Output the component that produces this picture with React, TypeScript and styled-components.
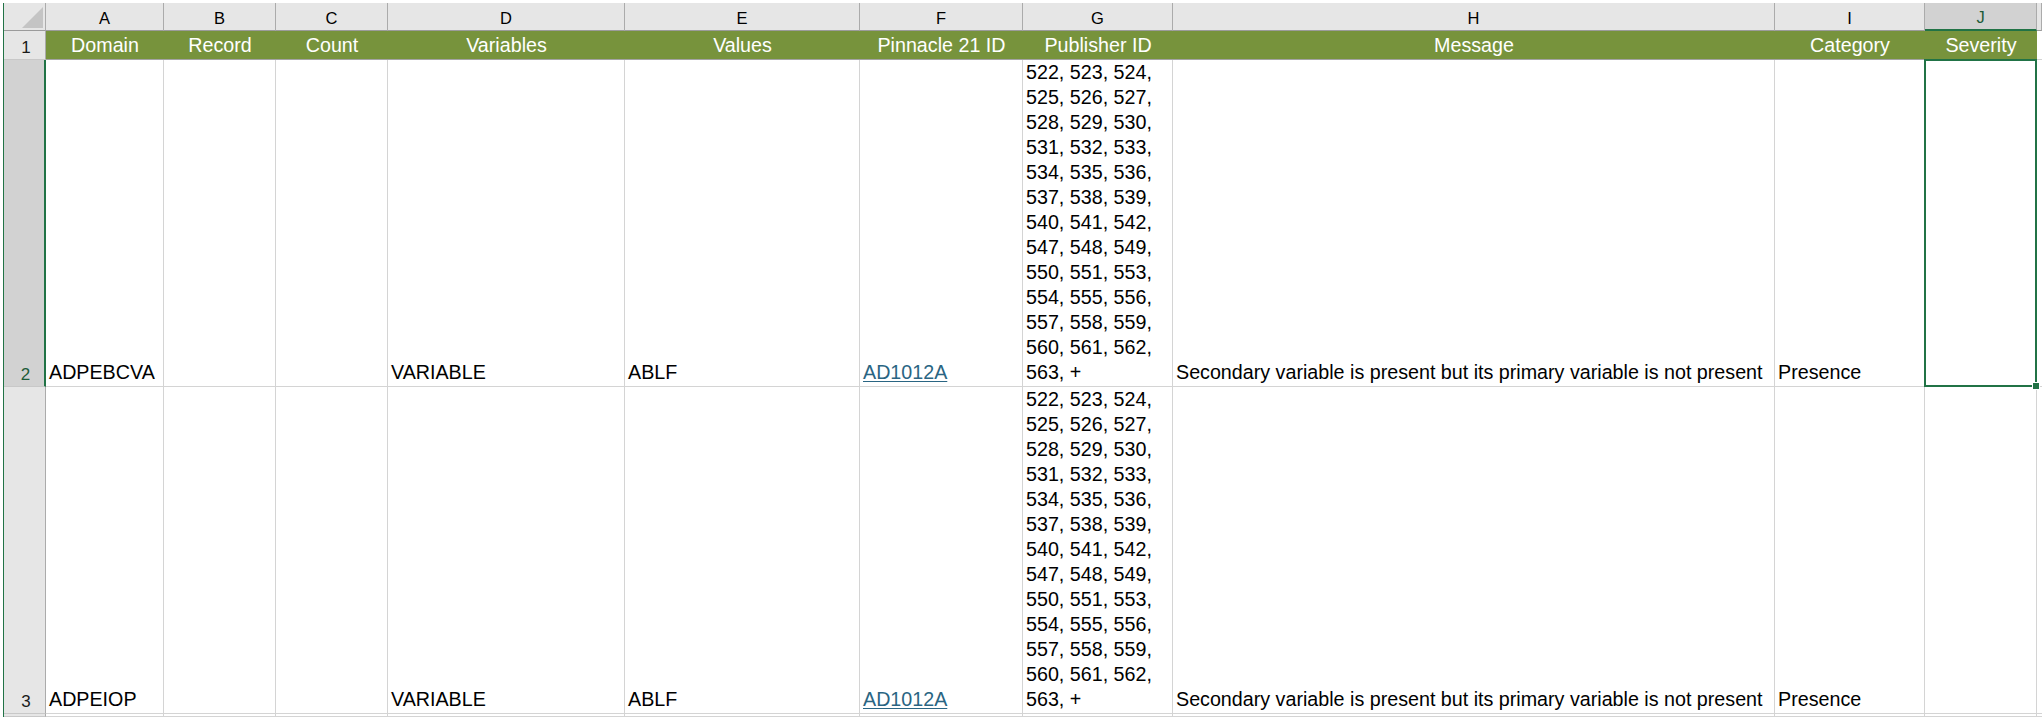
import React from 'react'
import styled, { createGlobalStyle } from 'styled-components'

const GlobalStyle = createGlobalStyle`
  html, body {
    margin: 0;
    background: #ffffff;
    overflow: hidden;
  }
`

const GREEN = '#217346'
const FONT = `"Liberation Sans", Arial, sans-serif`

interface Column {
  letter: string
  width: number
  title: string
}

const columns: Column[] = [
  { letter: 'A', width: 118, title: 'Domain' },
  { letter: 'B', width: 112, title: 'Record' },
  { letter: 'C', width: 112, title: 'Count' },
  { letter: 'D', width: 237, title: 'Variables' },
  { letter: 'E', width: 235, title: 'Values' },
  { letter: 'F', width: 163, title: 'Pinnacle 21 ID' },
  { letter: 'G', width: 150, title: 'Publisher ID' },
  { letter: 'H', width: 602, title: 'Message' },
  { letter: 'I', width: 150, title: 'Category' },
  { letter: 'J', width: 112, title: 'Severity' },
]

const publisherLines = [
  '522, 523, 524,',
  '525, 526, 527,',
  '528, 529, 530,',
  '531, 532, 533,',
  '534, 535, 536,',
  '537, 538, 539,',
  '540, 541, 542,',
  '547, 548, 549,',
  '550, 551, 553,',
  '554, 555, 556,',
  '557, 558, 559,',
  '560, 561, 562,',
  '563, +',
]

interface Issue {
  row: number
  domain: string
  variables: string
  values: string
  ruleId: string
  message: string
  category: string
}

const issues: Issue[] = [
  {
    row: 2,
    domain: 'ADPEBCVA',
    variables: 'VARIABLE',
    values: 'ABLF',
    ruleId: 'AD1012A',
    message: 'Secondary variable is present but its primary variable is not present',
    category: 'Presence',
  },
  {
    row: 3,
    domain: 'ADPEIOP',
    variables: 'VARIABLE',
    values: 'ABLF',
    ruleId: 'AD1012A',
    message: 'Secondary variable is present but its primary variable is not present',
    category: 'Presence',
  },
]

const SELECTED_ROW = 2
const SELECTED_COL = 'J'

const Frame = styled.div`
  padding: 3px 0 0 3px;
  height: 714px;
`

const Sheet = styled.div`
  border-left: 1px solid ${GREEN};
  display: grid;
  grid-template-columns: 42px ${columns.map((c) => `${c.width}px`).join(' ')} 1fr;
  grid-template-rows: 28px 29px 327px 327px 1fr;
  height: 100%;
  font-family: ${FONT};
`

const Corner = styled.div`
  background: #e6e6e6;
  border-right: 1px solid #ababab;
  border-bottom: 1px solid #9b9b9b;
  display: flex;
  align-items: flex-end;
  justify-content: flex-end;
  padding: 0 2px 2px 0;
`

const Triangle = styled.div`
  width: 21px;
  height: 21px;
  background: #c4c4c4;
  clip-path: polygon(100% 0, 100% 100%, 0 100%);
`

const ColHead = styled.div<{ $selected?: boolean }>`
  background: ${(p) => (p.$selected ? '#d2d2d2' : '#e6e6e6')};
  border-right: 1px solid #ababab;
  border-bottom: ${(p) => (p.$selected ? `2px solid ${GREEN}` : '1px solid #9b9b9b')};
  color: ${(p) => (p.$selected ? '#1d5c38' : '#000000')};
  font-size: 16.5px;
  display: flex;
  align-items: center;
  justify-content: center;
  padding-top: 3px;
  box-sizing: border-box;
`

const RowHead = styled.div<{ $selected?: boolean }>`
  background: ${(p) => (p.$selected ? '#d2d2d2' : '#e6e6e6')};
  border-right: ${(p) => (p.$selected ? `2px solid ${GREEN}` : '1px solid #ababab')};
  border-bottom: 1px solid #c8c8c8;
  color: ${(p) => (p.$selected ? '#1d5c38' : '#1a1a1a')};
  font-size: 17px;
  line-height: 20px;
  display: flex;
  align-items: flex-end;
  justify-content: center;
  padding: 0 0 1px 3px;
`

const TitleCell = styled.div`
  background: #77933c;
  border-bottom: 1px solid #a3a3a3;
  color: #ffffff;
  font-size: 19.7px;
  line-height: 25px;
  display: flex;
  align-items: flex-end;
  justify-content: center;
  padding-bottom: 1px;
  white-space: nowrap;
  overflow: hidden;
`

const BlankTitle = styled.div`
  border-bottom: 1px solid #d4d4d4;
`

const Cell = styled.div`
  position: relative;
  border-right: 1px solid #d4d4d4;
  border-bottom: 1px solid #d4d4d4;
  color: #000000;
  font-size: 19.7px;
  line-height: 25px;
  display: flex;
  flex-direction: column;
  justify-content: flex-end;
  padding: 0 3px 1px;
  white-space: nowrap;
  overflow: visible;
`

const Link = styled.span`
  color: #2a6583;
  text-decoration: underline;
  text-underline-offset: 2px;
`

const Selection = styled.div`
  position: absolute;
  top: -1px;
  left: -1px;
  right: -1px;
  bottom: -1px;
  border: 2px solid ${GREEN};
  z-index: 2;
  pointer-events: none;
`

const FillHandle = styled.div`
  position: absolute;
  right: -5px;
  bottom: -5px;
  width: 6px;
  height: 6px;
  background: ${GREEN};
  border: 1px solid #ffffff;
`

const Filler = styled.div`
  border-bottom: 1px solid #d4d4d4;
`

const HeaderRow: React.FC = () => (
  <>
    <Corner>
      <Triangle />
    </Corner>
    {columns.map((c) => (
      <ColHead key={c.letter} $selected={c.letter === SELECTED_COL}>
        {c.letter}
      </ColHead>
    ))}
    <ColHead />
  </>
)

const TitleRow: React.FC = () => (
  <>
    <RowHead>1</RowHead>
    {columns.map((c) => (
      <TitleCell key={c.letter}>{c.title}</TitleCell>
    ))}
    <BlankTitle />
  </>
)

const IssueRow: React.FC<{ issue: Issue }> = ({ issue }) => {
  const selected = issue.row === SELECTED_ROW
  return (
    <>
      <RowHead $selected={selected}>{issue.row}</RowHead>
      <Cell>{issue.domain}</Cell>
      <Cell />
      <Cell />
      <Cell>{issue.variables}</Cell>
      <Cell>{issue.values}</Cell>
      <Cell>
        <Link>{issue.ruleId}</Link>
      </Cell>
      <Cell>
        {publisherLines.map((line, i) => (
          <div key={i}>{line}</div>
        ))}
      </Cell>
      <Cell>{issue.message}</Cell>
      <Cell>{issue.category}</Cell>
      <Cell>
        {selected && (
          <Selection>
            <FillHandle />
          </Selection>
        )}
      </Cell>
      <Filler />
    </>
  )
}

// the next row only peeks in at the bottom edge, its number is out of view
const EmptyRow: React.FC = () => (
  <>
    <RowHead />
    {columns.map((c) => (
      <Cell key={c.letter} />
    ))}
    <Filler />
  </>
)

export default function App() {
  return (
    <Frame>
      <GlobalStyle />
      <Sheet>
        <HeaderRow />
        <TitleRow />
        {issues.map((issue) => (
          <IssueRow key={issue.row} issue={issue} />
        ))}
        <EmptyRow />
      </Sheet>
    </Frame>
  )
}
